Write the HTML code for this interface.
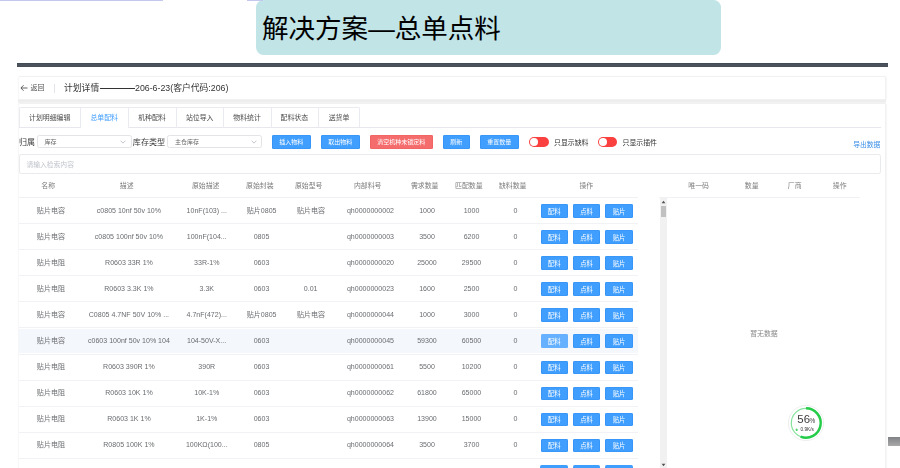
<!DOCTYPE html>
<html lang="zh-CN"><head><meta charset="utf-8"><title>解决方案—总单点料</title>
<style>
html,body{margin:0;padding:0;background:#fff}
body{width:900px;height:468px;position:relative;overflow:hidden;font-family:"Liberation Sans","Noto Sans CJK SC",sans-serif}
#p{position:absolute;left:0;top:0;width:900px;height:468px;overflow:hidden;background:#fff}
.a>div,.a>svg{position:absolute}
#shot{left:0;top:0;width:900px;height:468px;filter:blur(.35px)}
.t{white-space:nowrap}
.t svg{display:block;overflow:visible}
text{font-family:"Liberation Sans","Noto Sans CJK SC",sans-serif}
</style></head><body>
<div id="p" class="a">
<div style="left:0px;top:0px;width:163.3px;height:1.3px;background:#c5c8ee"></div>
<div style="left:255.9px;top:-0.4px;width:464.9px;height:54.9px;background:#c1e4e7;border-radius:7.5px"></div>
<svg style="left:262px;top:14.925px;overflow:visible" width="238.95" height="26.55" viewBox="0 -880 9000 1000"><text x="0" y="0" font-size="1000" fill="#000">解决方案—总单点料</text></svg>
<div style="left:246.7px;top:0px;width:16.5px;height:1.3px;background:#c5c8ee"></div>
<div style="left:17.3px;top:62.6px;width:870.8px;height:4.9px;background:linear-gradient(#3f4751,#4d555f 45%,#464d57)"></div>
<div class="a" id="shot">
<div style="left:17.8px;top:99px;width:868px;height:4.2px;background:linear-gradient(#f5f5f5,#eee 35%,#eee 65%,#f5f5f5)"></div>
<div style="left:17.6px;top:75.8px;width:868.6px;height:24px;background:#fff;border:0.8px solid #f1f1f1;border-left-color:#f7f7f7;border-radius:2px;box-sizing:border-box;box-shadow:0.6px 0 1.2px rgba(0,0,0,.04)"></div>
<div style="left:17.6px;top:102.6px;width:868.6px;height:380px;background:#fff;border:0.8px solid #f1f1f1;border-left-color:#f7f7f7;border-radius:2px;box-sizing:border-box;box-shadow:0.6px 0 1.2px rgba(0,0,0,.04)"></div>
<svg style="left:20px;top:84px" width="8" height="8" viewBox="0 0 8 8"><path d="M7.5 4H1M3.6 1.2L0.9 4l2.7 2.8" fill="none" stroke="#4a4a4a" stroke-width="0.85"/></svg>
<div class="t" style="left:29px;top:82px"><svg width="18" height="13" viewBox="0 0 18 13"><text x="1.5" y="8.37" font-size="7" fill="#555">返回</text></svg></div>
<div style="left:54px;top:84px;width:0.6px;height:8.5px;background:#e2e4ea"></div>
<div class="t" style="left:63px;top:81px"><svg width="39" height="16" viewBox="0 0 39 16"><text x="1" y="10.02" font-size="8.8" fill="#333">计划详情</text></svg></div>
<div style="left:99.5px;top:88.3px;width:35.5px;height:0.9px;background:#333"></div>
<div class="t" style="left:134px;top:81px"><svg width="97" height="16" viewBox="0 0 97 16"><text x="1" y="10.02" font-size="8.8" fill="#333">206-6-23(客户代码:206)</text></svg></div>
<div style="left:19.1px;top:107.4px;width:340.9px;height:20px;border:0.7px solid #e9ebf0;border-bottom:none;border-radius:2px 2px 0 0;box-sizing:border-box"></div>
<div style="left:19.1px;top:127px;width:862px;height:0.7px;background:#e6e8ee"></div>
<div class="t" style="left:28px;top:112px"><svg width="45" height="13" viewBox="0 0 45 13"><text x="1.05" y="8.43" font-size="6.9" fill="#4c4c4c">计划明细编辑</text></svg></div>
<div style="left:80.4px;top:107.5px;width:0.7px;height:20px;background:#e9ebf0"></div>
<div class="t" style="left:89px;top:112px"><svg width="32" height="13" viewBox="0 0 32 13"><text x="1.4" y="8.43" font-size="6.9" fill="#409eff">总单配料</text></svg></div>
<div style="left:128px;top:107.5px;width:0.7px;height:20px;background:#e9ebf0"></div>
<div class="t" style="left:137px;top:112px"><svg width="31" height="13" viewBox="0 0 31 13"><text x="1.2" y="8.43" font-size="6.9" fill="#4c4c4c">机种配料</text></svg></div>
<div style="left:176px;top:107.5px;width:0.7px;height:20px;background:#e9ebf0"></div>
<div class="t" style="left:184px;top:112px"><svg width="32" height="13" viewBox="0 0 32 13"><text x="1.9" y="8.43" font-size="6.9" fill="#4c4c4c">站位导入</text></svg></div>
<div style="left:223.4px;top:107.5px;width:0.7px;height:20px;background:#e9ebf0"></div>
<div class="t" style="left:232px;top:112px"><svg width="31" height="13" viewBox="0 0 31 13"><text x="1.3" y="8.43" font-size="6.9" fill="#4c4c4c">物料统计</text></svg></div>
<div style="left:270.8px;top:107.5px;width:0.7px;height:20px;background:#e9ebf0"></div>
<div class="t" style="left:279px;top:112px"><svg width="32" height="13" viewBox="0 0 32 13"><text x="1.6" y="8.43" font-size="6.9" fill="#4c4c4c">配料状态</text></svg></div>
<div style="left:318px;top:107.5px;width:0.7px;height:20px;background:#e9ebf0"></div>
<div class="t" style="left:327px;top:112px"><svg width="25" height="13" viewBox="0 0 25 13"><text x="1.65" y="8.43" font-size="6.9" fill="#4c4c4c">送货单</text></svg></div>
<div style="left:81.1px;top:126.8px;width:46.9px;height:1.2px;background:#fff"></div>
<div class="t" style="left:18px;top:135px"><svg width="19" height="15" viewBox="0 0 19 15"><text x="1" y="9.63" font-size="8" fill="#3a3a3a">归属</text></svg></div>
<div style="left:36.7px;top:135.2px;width:95.1px;height:13.2px;border:0.7px solid #e3e4e8;border-radius:2.4px;box-sizing:border-box;background:#fff"></div>
<div class="t" style="left:43px;top:136px"><svg width="16" height="12" viewBox="0 0 16 12"><text x="1.5" y="7.81" font-size="6" fill="#666">库存</text></svg></div>
<svg style="left:120px;top:139.5px" width="6" height="4" viewBox="0 0 6 4"><path d="M0.6 0.7L3 3.1L5.4 0.7" fill="none" stroke="#b4b8bf" stroke-width="0.8"/></svg>
<div class="t" style="left:131px;top:135px"><svg width="37" height="15" viewBox="0 0 37 15"><text x="1.8" y="9.57" font-size="8.1" fill="#3a3a3a">库存类型</text></svg></div>
<div style="left:167.2px;top:135.2px;width:94.6px;height:13.2px;border:0.7px solid #e3e4e8;border-radius:2.4px;box-sizing:border-box;background:#fff"></div>
<div class="t" style="left:174px;top:136px"><svg width="27" height="12" viewBox="0 0 27 12"><text x="1" y="7.81" font-size="6" fill="#666">主仓库存</text></svg></div>
<svg style="left:250.5px;top:139.5px" width="6" height="4" viewBox="0 0 6 4"><path d="M0.6 0.7L3 3.1L5.4 0.7" fill="none" stroke="#b4b8bf" stroke-width="0.8"/></svg>
<div style="left:272px;top:135px;width:38.7px;height:13.6px;background:#409eff;border-radius:1.7px;box-shadow:inset 0 0 0 0.6px #318ff3"></div>
<div class="t" style="left:278px;top:136px"><svg width="28" height="12" viewBox="0 0 28 12"><text x="1.35" y="7.91" font-size="6" fill="#fff">插入物料</text></svg></div>
<div style="left:321px;top:135px;width:38.7px;height:13.6px;background:#409eff;border-radius:1.7px;box-shadow:inset 0 0 0 0.6px #318ff3"></div>
<div class="t" style="left:327px;top:136px"><svg width="28" height="12" viewBox="0 0 28 12"><text x="1.35" y="7.91" font-size="6" fill="#fff">取出物料</text></svg></div>
<div style="left:370px;top:135px;width:62.6px;height:13.6px;background:#f56c6c;border-radius:1.7px;box-shadow:inset 0 0 0 0.6px #ee5f5f"></div>
<div class="t" style="left:376px;top:136px"><svg width="52" height="12" viewBox="0 0 52 12"><text x="1.3" y="7.91" font-size="6" fill="#fff">清空机种未锁定料</text></svg></div>
<div style="left:443px;top:135px;width:26.5px;height:13.6px;background:#409eff;border-radius:1.7px;box-shadow:inset 0 0 0 0.6px #318ff3"></div>
<div class="t" style="left:449px;top:136px"><svg width="16" height="12" viewBox="0 0 16 12"><text x="1.25" y="7.91" font-size="6" fill="#fff">刷新</text></svg></div>
<div style="left:480px;top:135px;width:38.7px;height:13.6px;background:#409eff;border-radius:1.7px;box-shadow:inset 0 0 0 0.6px #318ff3"></div>
<div class="t" style="left:486px;top:136px"><svg width="28" height="12" viewBox="0 0 28 12"><text x="1.35" y="7.91" font-size="6" fill="#fff">重置数量</text></svg></div>
<div style="left:529px;top:136.5px;width:19.7px;height:10.4px;background:#fb4040;border-radius:5.2px"></div>
<div style="left:530px;top:137.5px;width:8.4px;height:8.4px;background:#fff;border-radius:50%"></div>
<div class="t" style="left:553px;top:136px"><svg width="38" height="13" viewBox="0 0 38 13"><text x="1" y="8.53" font-size="6.9" fill="#333">只显示缺料</text></svg></div>
<div style="left:597.5px;top:136.5px;width:19.7px;height:10.4px;background:#fb4040;border-radius:5.2px"></div>
<div style="left:598.5px;top:137.5px;width:8.4px;height:8.4px;background:#fff;border-radius:50%"></div>
<div class="t" style="left:621px;top:136px"><svg width="39" height="13" viewBox="0 0 39 13"><text x="1.5" y="8.53" font-size="6.9" fill="#333">只显示插件</text></svg></div>
<div class="t" style="left:852px;top:139px"><svg width="31" height="13" viewBox="0 0 31 13"><text x="1.2" y="8.4" font-size="6.8" fill="#3a8ee6">导出数据</text></svg></div>
<div style="left:19.1px;top:154.2px;width:862px;height:19.6px;border:0.7px solid #e9eaed;border-radius:2.4px;box-sizing:border-box;background:#fff"></div>
<div class="t" style="left:25px;top:159px"><svg width="51" height="13" viewBox="0 0 51 13"><text x="1.4" y="7.9" font-size="6.8" fill="#c0c4cc">请输入检索内容</text></svg></div>
<div class="t" style="left:40px;top:180px"><svg width="18" height="13" viewBox="0 0 18 13"><text x="1.3" y="8.23" font-size="6.9" fill="#7c7c7c">名称</text></svg></div>
<div class="t" style="left:118px;top:180px"><svg width="18" height="13" viewBox="0 0 18 13"><text x="1.8" y="8.23" font-size="6.9" fill="#7c7c7c">描述</text></svg></div>
<div class="t" style="left:190px;top:180px"><svg width="32" height="13" viewBox="0 0 32 13"><text x="1.9" y="8.23" font-size="6.9" fill="#7c7c7c">原始描述</text></svg></div>
<div class="t" style="left:245px;top:180px"><svg width="31" height="13" viewBox="0 0 31 13"><text x="1.1" y="8.23" font-size="6.9" fill="#7c7c7c">原始封装</text></svg></div>
<div class="t" style="left:293px;top:180px"><svg width="32" height="13" viewBox="0 0 32 13"><text x="1.9" y="8.23" font-size="6.9" fill="#7c7c7c">原始型号</text></svg></div>
<div class="t" style="left:352px;top:180px"><svg width="32" height="13" viewBox="0 0 32 13"><text x="1.9" y="8.23" font-size="6.9" fill="#7c7c7c">内部料号</text></svg></div>
<div class="t" style="left:409px;top:180px"><svg width="32" height="13" viewBox="0 0 32 13"><text x="1.9" y="8.23" font-size="6.9" fill="#7c7c7c">需求数量</text></svg></div>
<div class="t" style="left:454px;top:180px"><svg width="31" height="13" viewBox="0 0 31 13"><text x="1" y="8.23" font-size="6.9" fill="#7c7c7c">匹配数量</text></svg></div>
<div class="t" style="left:497px;top:180px"><svg width="32" height="13" viewBox="0 0 32 13"><text x="1.9" y="8.23" font-size="6.9" fill="#7c7c7c">缺料数量</text></svg></div>
<div class="t" style="left:578px;top:180px"><svg width="18" height="13" viewBox="0 0 18 13"><text x="1.4" y="8.23" font-size="6.9" fill="#7c7c7c">操作</text></svg></div>
<div class="t" style="left:687px;top:180px"><svg width="25" height="13" viewBox="0 0 25 13"><text x="1.35" y="8.23" font-size="6.9" fill="#7c7c7c">唯一码</text></svg></div>
<div class="t" style="left:743px;top:180px"><svg width="18" height="13" viewBox="0 0 18 13"><text x="1.8" y="8.23" font-size="6.9" fill="#7c7c7c">数量</text></svg></div>
<div class="t" style="left:786px;top:180px"><svg width="18" height="13" viewBox="0 0 18 13"><text x="1.8" y="8.23" font-size="6.9" fill="#7c7c7c">厂商</text></svg></div>
<div class="t" style="left:831px;top:180px"><svg width="18" height="13" viewBox="0 0 18 13"><text x="1.8" y="8.23" font-size="6.9" fill="#7c7c7c">操作</text></svg></div>
<div style="left:19px;top:197.2px;width:619px;height:0.8px;background:#f0f1f4"></div>
<div style="left:659px;top:197.2px;width:200.5px;height:0.8px;background:#f0f1f4"></div>
<div style="left:19px;top:223.25px;width:619px;height:0.8px;background:#f1f2f5"></div>
<div class="t" style="left:35px;top:204px"><svg width="32" height="13" viewBox="0 0 32 13"><text x="1.83" y="8.84" font-size="7.06" fill="#6a6c70">贴片电容</text></svg></div>
<div class="t" style="left:95px;top:204px"><svg width="69" height="13" viewBox="0 0 69 13"><text x="1.81" y="8.84" font-size="7.06" fill="#6a6c70">c0805 10nf 50v 10%</text></svg></div>
<div class="t" style="left:185px;top:204px"><svg width="45" height="13" viewBox="0 0 45 13"><text x="1.59" y="8.84" font-size="7.06" fill="#6a6c70">10nF(103) ...</text></svg></div>
<div class="t" style="left:245px;top:204px"><svg width="34" height="13" viewBox="0 0 34 13"><text x="1.76" y="8.84" font-size="7.06" fill="#6a6c70">贴片0805</text></svg></div>
<div class="t" style="left:295px;top:204px"><svg width="32" height="13" viewBox="0 0 32 13"><text x="1.93" y="8.84" font-size="7.06" fill="#6a6c70">贴片电容</text></svg></div>
<div class="t" style="left:345px;top:204px"><svg width="52" height="13" viewBox="0 0 52 13"><text x="1.94" y="8.84" font-size="7.06" fill="#6a6c70">qh0000000002</text></svg></div>
<div class="t" style="left:418px;top:204px"><svg width="19" height="13" viewBox="0 0 19 13"><text x="1.15" y="8.84" font-size="7.06" fill="#6a6c70">1000</text></svg></div>
<div class="t" style="left:462px;top:204px"><svg width="20" height="13" viewBox="0 0 20 13"><text x="1.65" y="8.84" font-size="7.06" fill="#6a6c70">1000</text></svg></div>
<div class="t" style="left:512px;top:204px"><svg width="8" height="13" viewBox="0 0 8 13"><text x="1.54" y="8.84" font-size="7.06" fill="#6a6c70">0</text></svg></div>
<div style="left:540.6px;top:204.2px;width:27.1px;height:13.5px;background:#409eff;border-radius:1.7px;box-shadow:inset 0 0 0 0.6px #318ff3"></div>
<div class="t" style="left:546px;top:206px"><svg width="17" height="12" viewBox="0 0 17 12"><text x="1.85" y="7.57" font-size="6.3" fill="#fff">配料</text></svg></div>
<div style="left:572.9px;top:204.2px;width:27.2px;height:13.5px;background:#409eff;border-radius:1.7px;box-shadow:inset 0 0 0 0.6px #318ff3"></div>
<div class="t" style="left:579px;top:206px"><svg width="16" height="12" viewBox="0 0 16 12"><text x="1.2" y="7.57" font-size="6.3" fill="#fff">点料</text></svg></div>
<div style="left:605.3px;top:204.2px;width:27.4px;height:13.5px;background:#409eff;border-radius:1.7px;box-shadow:inset 0 0 0 0.6px #318ff3"></div>
<div class="t" style="left:611px;top:206px"><svg width="17" height="12" viewBox="0 0 17 12"><text x="1.7" y="7.57" font-size="6.3" fill="#fff">贴片</text></svg></div>
<div style="left:19px;top:249.3px;width:619px;height:0.8px;background:#f1f2f5"></div>
<div class="t" style="left:35px;top:230px"><svg width="32" height="13" viewBox="0 0 32 13"><text x="1.83" y="8.88" font-size="7.06" fill="#6a6c70">贴片电容</text></svg></div>
<div class="t" style="left:93px;top:230px"><svg width="73" height="13" viewBox="0 0 73 13"><text x="1.85" y="8.88" font-size="7.06" fill="#6a6c70">c0805 100nf 50v 10%</text></svg></div>
<div class="t" style="left:185px;top:230px"><svg width="44" height="13" viewBox="0 0 44 13"><text x="1.78" y="8.88" font-size="7.06" fill="#6a6c70">100nF(104...</text></svg></div>
<div class="t" style="left:252px;top:230px"><svg width="20" height="13" viewBox="0 0 20 13"><text x="1.65" y="8.88" font-size="7.06" fill="#6a6c70">0805</text></svg></div>
<div class="t" style="left:345px;top:230px"><svg width="52" height="13" viewBox="0 0 52 13"><text x="1.94" y="8.88" font-size="7.06" fill="#6a6c70">qh0000000003</text></svg></div>
<div class="t" style="left:418px;top:230px"><svg width="19" height="13" viewBox="0 0 19 13"><text x="1.15" y="8.88" font-size="7.06" fill="#6a6c70">3500</text></svg></div>
<div class="t" style="left:462px;top:230px"><svg width="20" height="13" viewBox="0 0 20 13"><text x="1.65" y="8.88" font-size="7.06" fill="#6a6c70">6200</text></svg></div>
<div class="t" style="left:512px;top:230px"><svg width="8" height="13" viewBox="0 0 8 13"><text x="1.54" y="8.88" font-size="7.06" fill="#6a6c70">0</text></svg></div>
<div style="left:540.6px;top:230.25px;width:27.1px;height:13.5px;background:#409eff;border-radius:1.7px;box-shadow:inset 0 0 0 0.6px #318ff3"></div>
<div class="t" style="left:546px;top:232px"><svg width="17" height="12" viewBox="0 0 17 12"><text x="1.85" y="7.62" font-size="6.3" fill="#fff">配料</text></svg></div>
<div style="left:572.9px;top:230.25px;width:27.2px;height:13.5px;background:#409eff;border-radius:1.7px;box-shadow:inset 0 0 0 0.6px #318ff3"></div>
<div class="t" style="left:579px;top:232px"><svg width="16" height="12" viewBox="0 0 16 12"><text x="1.2" y="7.62" font-size="6.3" fill="#fff">点料</text></svg></div>
<div style="left:605.3px;top:230.25px;width:27.4px;height:13.5px;background:#409eff;border-radius:1.7px;box-shadow:inset 0 0 0 0.6px #318ff3"></div>
<div class="t" style="left:611px;top:232px"><svg width="17" height="12" viewBox="0 0 17 12"><text x="1.7" y="7.62" font-size="6.3" fill="#fff">贴片</text></svg></div>
<div style="left:19px;top:275.35px;width:619px;height:0.8px;background:#f1f2f5"></div>
<div class="t" style="left:35px;top:256px"><svg width="32" height="13" viewBox="0 0 32 13"><text x="1.83" y="8.92" font-size="7.06" fill="#6a6c70">贴片电阻</text></svg></div>
<div class="t" style="left:104px;top:256px"><svg width="51" height="13" viewBox="0 0 51 13"><text x="1.06" y="8.92" font-size="7.06" fill="#6a6c70">R0603 33R 1%</text></svg></div>
<div class="t" style="left:193px;top:256px"><svg width="29" height="13" viewBox="0 0 29 13"><text x="1.05" y="8.92" font-size="7.06" fill="#6a6c70">33R-1%</text></svg></div>
<div class="t" style="left:252px;top:256px"><svg width="20" height="13" viewBox="0 0 20 13"><text x="1.65" y="8.92" font-size="7.06" fill="#6a6c70">0603</text></svg></div>
<div class="t" style="left:345px;top:256px"><svg width="52" height="13" viewBox="0 0 52 13"><text x="1.94" y="8.92" font-size="7.06" fill="#6a6c70">qh0000000020</text></svg></div>
<div class="t" style="left:416px;top:256px"><svg width="23" height="13" viewBox="0 0 23 13"><text x="1.18" y="8.92" font-size="7.06" fill="#6a6c70">25000</text></svg></div>
<div class="t" style="left:460px;top:256px"><svg width="24" height="13" viewBox="0 0 24 13"><text x="1.68" y="8.92" font-size="7.06" fill="#6a6c70">29500</text></svg></div>
<div class="t" style="left:512px;top:256px"><svg width="8" height="13" viewBox="0 0 8 13"><text x="1.54" y="8.92" font-size="7.06" fill="#6a6c70">0</text></svg></div>
<div style="left:540.6px;top:256.3px;width:27.1px;height:13.5px;background:#409eff;border-radius:1.7px;box-shadow:inset 0 0 0 0.6px #318ff3"></div>
<div class="t" style="left:546px;top:258px"><svg width="17" height="12" viewBox="0 0 17 12"><text x="1.85" y="7.67" font-size="6.3" fill="#fff">配料</text></svg></div>
<div style="left:572.9px;top:256.3px;width:27.2px;height:13.5px;background:#409eff;border-radius:1.7px;box-shadow:inset 0 0 0 0.6px #318ff3"></div>
<div class="t" style="left:579px;top:258px"><svg width="16" height="12" viewBox="0 0 16 12"><text x="1.2" y="7.67" font-size="6.3" fill="#fff">点料</text></svg></div>
<div style="left:605.3px;top:256.3px;width:27.4px;height:13.5px;background:#409eff;border-radius:1.7px;box-shadow:inset 0 0 0 0.6px #318ff3"></div>
<div class="t" style="left:611px;top:258px"><svg width="17" height="12" viewBox="0 0 17 12"><text x="1.7" y="7.67" font-size="6.3" fill="#fff">贴片</text></svg></div>
<div style="left:19px;top:301.4px;width:619px;height:0.8px;background:#f1f2f5"></div>
<div class="t" style="left:35px;top:282px"><svg width="32" height="13" viewBox="0 0 32 13"><text x="1.83" y="8.96" font-size="7.06" fill="#6a6c70">贴片电阻</text></svg></div>
<div class="t" style="left:103px;top:282px"><svg width="53" height="13" viewBox="0 0 53 13"><text x="1.27" y="8.96" font-size="7.06" fill="#6a6c70">R0603 3.3K 1%</text></svg></div>
<div class="t" style="left:198px;top:282px"><svg width="19" height="13" viewBox="0 0 19 13"><text x="1.54" y="8.96" font-size="7.06" fill="#6a6c70">3.3K</text></svg></div>
<div class="t" style="left:252px;top:282px"><svg width="20" height="13" viewBox="0 0 20 13"><text x="1.65" y="8.96" font-size="7.06" fill="#6a6c70">0603</text></svg></div>
<div class="t" style="left:302px;top:282px"><svg width="18" height="13" viewBox="0 0 18 13"><text x="1.83" y="8.96" font-size="7.06" fill="#6a6c70">0.01</text></svg></div>
<div class="t" style="left:345px;top:282px"><svg width="52" height="13" viewBox="0 0 52 13"><text x="1.94" y="8.96" font-size="7.06" fill="#6a6c70">qh0000000023</text></svg></div>
<div class="t" style="left:418px;top:282px"><svg width="19" height="13" viewBox="0 0 19 13"><text x="1.15" y="8.96" font-size="7.06" fill="#6a6c70">1600</text></svg></div>
<div class="t" style="left:462px;top:282px"><svg width="20" height="13" viewBox="0 0 20 13"><text x="1.65" y="8.96" font-size="7.06" fill="#6a6c70">2500</text></svg></div>
<div class="t" style="left:512px;top:282px"><svg width="8" height="13" viewBox="0 0 8 13"><text x="1.54" y="8.96" font-size="7.06" fill="#6a6c70">0</text></svg></div>
<div style="left:540.6px;top:282.35px;width:27.1px;height:13.5px;background:#409eff;border-radius:1.7px;box-shadow:inset 0 0 0 0.6px #318ff3"></div>
<div class="t" style="left:546px;top:284px"><svg width="17" height="12" viewBox="0 0 17 12"><text x="1.85" y="7.72" font-size="6.3" fill="#fff">配料</text></svg></div>
<div style="left:572.9px;top:282.35px;width:27.2px;height:13.5px;background:#409eff;border-radius:1.7px;box-shadow:inset 0 0 0 0.6px #318ff3"></div>
<div class="t" style="left:579px;top:284px"><svg width="16" height="12" viewBox="0 0 16 12"><text x="1.2" y="7.72" font-size="6.3" fill="#fff">点料</text></svg></div>
<div style="left:605.3px;top:282.35px;width:27.4px;height:13.5px;background:#409eff;border-radius:1.7px;box-shadow:inset 0 0 0 0.6px #318ff3"></div>
<div class="t" style="left:611px;top:284px"><svg width="17" height="12" viewBox="0 0 17 12"><text x="1.7" y="7.72" font-size="6.3" fill="#fff">贴片</text></svg></div>
<div style="left:19px;top:327.45px;width:619px;height:0.8px;background:#f1f2f5"></div>
<div class="t" style="left:35px;top:308px"><svg width="32" height="13" viewBox="0 0 32 13"><text x="1.83" y="9" font-size="7.06" fill="#6a6c70">贴片电容</text></svg></div>
<div class="t" style="left:87px;top:308px"><svg width="85" height="13" viewBox="0 0 85 13"><text x="1.77" y="9" font-size="7.06" fill="#6a6c70">C0805 4.7NF 50V 10% ...</text></svg></div>
<div class="t" style="left:185px;top:308px"><svg width="45" height="13" viewBox="0 0 45 13"><text x="1.59" y="9" font-size="7.06" fill="#6a6c70">4.7nF(472)...</text></svg></div>
<div class="t" style="left:245px;top:308px"><svg width="34" height="13" viewBox="0 0 34 13"><text x="1.76" y="9" font-size="7.06" fill="#6a6c70">贴片0805</text></svg></div>
<div class="t" style="left:295px;top:308px"><svg width="32" height="13" viewBox="0 0 32 13"><text x="1.93" y="9" font-size="7.06" fill="#6a6c70">贴片电容</text></svg></div>
<div class="t" style="left:345px;top:308px"><svg width="52" height="13" viewBox="0 0 52 13"><text x="1.94" y="9" font-size="7.06" fill="#6a6c70">qh0000000044</text></svg></div>
<div class="t" style="left:418px;top:308px"><svg width="19" height="13" viewBox="0 0 19 13"><text x="1.15" y="9" font-size="7.06" fill="#6a6c70">1000</text></svg></div>
<div class="t" style="left:462px;top:308px"><svg width="20" height="13" viewBox="0 0 20 13"><text x="1.65" y="9" font-size="7.06" fill="#6a6c70">3000</text></svg></div>
<div class="t" style="left:512px;top:308px"><svg width="8" height="13" viewBox="0 0 8 13"><text x="1.54" y="9" font-size="7.06" fill="#6a6c70">0</text></svg></div>
<div style="left:540.6px;top:308.4px;width:27.1px;height:13.5px;background:#409eff;border-radius:1.7px;box-shadow:inset 0 0 0 0.6px #318ff3"></div>
<div class="t" style="left:546px;top:310px"><svg width="17" height="12" viewBox="0 0 17 12"><text x="1.85" y="7.77" font-size="6.3" fill="#fff">配料</text></svg></div>
<div style="left:572.9px;top:308.4px;width:27.2px;height:13.5px;background:#409eff;border-radius:1.7px;box-shadow:inset 0 0 0 0.6px #318ff3"></div>
<div class="t" style="left:579px;top:310px"><svg width="16" height="12" viewBox="0 0 16 12"><text x="1.2" y="7.77" font-size="6.3" fill="#fff">点料</text></svg></div>
<div style="left:605.3px;top:308.4px;width:27.4px;height:13.5px;background:#409eff;border-radius:1.7px;box-shadow:inset 0 0 0 0.6px #318ff3"></div>
<div class="t" style="left:611px;top:310px"><svg width="17" height="12" viewBox="0 0 17 12"><text x="1.7" y="7.77" font-size="6.3" fill="#fff">贴片</text></svg></div>
<div style="left:19px;top:328.65px;width:619px;height:24.85px;background:#f4f7fb"></div>
<div style="left:19px;top:353.5px;width:619px;height:0.8px;background:#f1f2f5"></div>
<div class="t" style="left:35px;top:334px"><svg width="32" height="13" viewBox="0 0 32 13"><text x="1.83" y="9.04" font-size="7.06" fill="#6a6c70">贴片电容</text></svg></div>
<div class="t" style="left:86px;top:334px"><svg width="87" height="13" viewBox="0 0 87 13"><text x="1.98" y="9.04" font-size="7.06" fill="#6a6c70">c0603 100nf 50v 10% 104</text></svg></div>
<div class="t" style="left:185px;top:334px"><svg width="44" height="13" viewBox="0 0 44 13"><text x="1.98" y="9.04" font-size="7.06" fill="#6a6c70">104-50V-X...</text></svg></div>
<div class="t" style="left:252px;top:334px"><svg width="20" height="13" viewBox="0 0 20 13"><text x="1.65" y="9.04" font-size="7.06" fill="#6a6c70">0603</text></svg></div>
<div class="t" style="left:345px;top:334px"><svg width="52" height="13" viewBox="0 0 52 13"><text x="1.94" y="9.04" font-size="7.06" fill="#6a6c70">qh0000000045</text></svg></div>
<div class="t" style="left:416px;top:334px"><svg width="23" height="13" viewBox="0 0 23 13"><text x="1.18" y="9.04" font-size="7.06" fill="#6a6c70">59300</text></svg></div>
<div class="t" style="left:460px;top:334px"><svg width="24" height="13" viewBox="0 0 24 13"><text x="1.68" y="9.04" font-size="7.06" fill="#6a6c70">60500</text></svg></div>
<div class="t" style="left:512px;top:334px"><svg width="8" height="13" viewBox="0 0 8 13"><text x="1.54" y="9.04" font-size="7.06" fill="#6a6c70">0</text></svg></div>
<div style="left:540.6px;top:334.45px;width:27.1px;height:13.5px;background:#66b1ff;border-radius:1.7px;box-shadow:inset 0 0 0 0.6px #66b1ff"></div>
<div class="t" style="left:546px;top:336px"><svg width="17" height="12" viewBox="0 0 17 12"><text x="1.85" y="7.82" font-size="6.3" fill="#fff">配料</text></svg></div>
<div style="left:572.9px;top:334.45px;width:27.2px;height:13.5px;background:#409eff;border-radius:1.7px;box-shadow:inset 0 0 0 0.6px #318ff3"></div>
<div class="t" style="left:579px;top:336px"><svg width="16" height="12" viewBox="0 0 16 12"><text x="1.2" y="7.82" font-size="6.3" fill="#fff">点料</text></svg></div>
<div style="left:605.3px;top:334.45px;width:27.4px;height:13.5px;background:#409eff;border-radius:1.7px;box-shadow:inset 0 0 0 0.6px #318ff3"></div>
<div class="t" style="left:611px;top:336px"><svg width="17" height="12" viewBox="0 0 17 12"><text x="1.7" y="7.82" font-size="6.3" fill="#fff">贴片</text></svg></div>
<div style="left:19px;top:379.55px;width:619px;height:0.8px;background:#f1f2f5"></div>
<div class="t" style="left:35px;top:361px"><svg width="32" height="13" viewBox="0 0 32 13"><text x="1.83" y="8.08" font-size="7.06" fill="#6a6c70">贴片电阻</text></svg></div>
<div class="t" style="left:102px;top:361px"><svg width="55" height="13" viewBox="0 0 55 13"><text x="1.1" y="8.08" font-size="7.06" fill="#6a6c70">R0603 390R 1%</text></svg></div>
<div class="t" style="left:197px;top:361px"><svg width="21" height="13" viewBox="0 0 21 13"><text x="1.36" y="8.08" font-size="7.06" fill="#6a6c70">390R</text></svg></div>
<div class="t" style="left:252px;top:361px"><svg width="20" height="13" viewBox="0 0 20 13"><text x="1.65" y="8.08" font-size="7.06" fill="#6a6c70">0603</text></svg></div>
<div class="t" style="left:345px;top:361px"><svg width="52" height="13" viewBox="0 0 52 13"><text x="1.94" y="8.08" font-size="7.06" fill="#6a6c70">qh0000000061</text></svg></div>
<div class="t" style="left:418px;top:361px"><svg width="19" height="13" viewBox="0 0 19 13"><text x="1.15" y="8.08" font-size="7.06" fill="#6a6c70">5500</text></svg></div>
<div class="t" style="left:460px;top:361px"><svg width="24" height="13" viewBox="0 0 24 13"><text x="1.68" y="8.08" font-size="7.06" fill="#6a6c70">10200</text></svg></div>
<div class="t" style="left:512px;top:361px"><svg width="8" height="13" viewBox="0 0 8 13"><text x="1.54" y="8.08" font-size="7.06" fill="#6a6c70">0</text></svg></div>
<div style="left:540.6px;top:360.5px;width:27.1px;height:13.5px;background:#409eff;border-radius:1.7px;box-shadow:inset 0 0 0 0.6px #318ff3"></div>
<div class="t" style="left:546px;top:362px"><svg width="17" height="12" viewBox="0 0 17 12"><text x="1.85" y="7.87" font-size="6.3" fill="#fff">配料</text></svg></div>
<div style="left:572.9px;top:360.5px;width:27.2px;height:13.5px;background:#409eff;border-radius:1.7px;box-shadow:inset 0 0 0 0.6px #318ff3"></div>
<div class="t" style="left:579px;top:362px"><svg width="16" height="12" viewBox="0 0 16 12"><text x="1.2" y="7.87" font-size="6.3" fill="#fff">点料</text></svg></div>
<div style="left:605.3px;top:360.5px;width:27.4px;height:13.5px;background:#409eff;border-radius:1.7px;box-shadow:inset 0 0 0 0.6px #318ff3"></div>
<div class="t" style="left:611px;top:362px"><svg width="17" height="12" viewBox="0 0 17 12"><text x="1.7" y="7.87" font-size="6.3" fill="#fff">贴片</text></svg></div>
<div style="left:19px;top:405.6px;width:619px;height:0.8px;background:#f1f2f5"></div>
<div class="t" style="left:35px;top:387px"><svg width="32" height="13" viewBox="0 0 32 13"><text x="1.83" y="8.12" font-size="7.06" fill="#6a6c70">贴片电阻</text></svg></div>
<div class="t" style="left:104px;top:387px"><svg width="51" height="13" viewBox="0 0 51 13"><text x="1.25" y="8.12" font-size="7.06" fill="#6a6c70">R0603 10K 1%</text></svg></div>
<div class="t" style="left:193px;top:387px"><svg width="29" height="13" viewBox="0 0 29 13"><text x="1.24" y="8.12" font-size="7.06" fill="#6a6c70">10K-1%</text></svg></div>
<div class="t" style="left:252px;top:387px"><svg width="20" height="13" viewBox="0 0 20 13"><text x="1.65" y="8.12" font-size="7.06" fill="#6a6c70">0603</text></svg></div>
<div class="t" style="left:345px;top:387px"><svg width="52" height="13" viewBox="0 0 52 13"><text x="1.94" y="8.12" font-size="7.06" fill="#6a6c70">qh0000000062</text></svg></div>
<div class="t" style="left:416px;top:387px"><svg width="23" height="13" viewBox="0 0 23 13"><text x="1.18" y="8.12" font-size="7.06" fill="#6a6c70">61800</text></svg></div>
<div class="t" style="left:460px;top:387px"><svg width="24" height="13" viewBox="0 0 24 13"><text x="1.68" y="8.12" font-size="7.06" fill="#6a6c70">65000</text></svg></div>
<div class="t" style="left:512px;top:387px"><svg width="8" height="13" viewBox="0 0 8 13"><text x="1.54" y="8.12" font-size="7.06" fill="#6a6c70">0</text></svg></div>
<div style="left:540.6px;top:386.55px;width:27.1px;height:13.5px;background:#409eff;border-radius:1.7px;box-shadow:inset 0 0 0 0.6px #318ff3"></div>
<div class="t" style="left:546px;top:388px"><svg width="17" height="12" viewBox="0 0 17 12"><text x="1.85" y="7.92" font-size="6.3" fill="#fff">配料</text></svg></div>
<div style="left:572.9px;top:386.55px;width:27.2px;height:13.5px;background:#409eff;border-radius:1.7px;box-shadow:inset 0 0 0 0.6px #318ff3"></div>
<div class="t" style="left:579px;top:388px"><svg width="16" height="12" viewBox="0 0 16 12"><text x="1.2" y="7.92" font-size="6.3" fill="#fff">点料</text></svg></div>
<div style="left:605.3px;top:386.55px;width:27.4px;height:13.5px;background:#409eff;border-radius:1.7px;box-shadow:inset 0 0 0 0.6px #318ff3"></div>
<div class="t" style="left:611px;top:388px"><svg width="17" height="12" viewBox="0 0 17 12"><text x="1.7" y="7.92" font-size="6.3" fill="#fff">贴片</text></svg></div>
<div style="left:19px;top:431.65px;width:619px;height:0.8px;background:#f1f2f5"></div>
<div class="t" style="left:35px;top:413px"><svg width="32" height="13" viewBox="0 0 32 13"><text x="1.83" y="8.16" font-size="7.06" fill="#6a6c70">贴片电阻</text></svg></div>
<div class="t" style="left:106px;top:413px"><svg width="47" height="13" viewBox="0 0 47 13"><text x="1.22" y="8.16" font-size="7.06" fill="#6a6c70">R0603 1K 1%</text></svg></div>
<div class="t" style="left:195px;top:413px"><svg width="25" height="13" viewBox="0 0 25 13"><text x="1.2" y="8.16" font-size="7.06" fill="#6a6c70">1K-1%</text></svg></div>
<div class="t" style="left:252px;top:413px"><svg width="20" height="13" viewBox="0 0 20 13"><text x="1.65" y="8.16" font-size="7.06" fill="#6a6c70">0603</text></svg></div>
<div class="t" style="left:345px;top:413px"><svg width="52" height="13" viewBox="0 0 52 13"><text x="1.94" y="8.16" font-size="7.06" fill="#6a6c70">qh0000000063</text></svg></div>
<div class="t" style="left:416px;top:413px"><svg width="23" height="13" viewBox="0 0 23 13"><text x="1.18" y="8.16" font-size="7.06" fill="#6a6c70">13900</text></svg></div>
<div class="t" style="left:460px;top:413px"><svg width="24" height="13" viewBox="0 0 24 13"><text x="1.68" y="8.16" font-size="7.06" fill="#6a6c70">15000</text></svg></div>
<div class="t" style="left:512px;top:413px"><svg width="8" height="13" viewBox="0 0 8 13"><text x="1.54" y="8.16" font-size="7.06" fill="#6a6c70">0</text></svg></div>
<div style="left:540.6px;top:412.6px;width:27.1px;height:13.5px;background:#409eff;border-radius:1.7px;box-shadow:inset 0 0 0 0.6px #318ff3"></div>
<div class="t" style="left:546px;top:414px"><svg width="17" height="12" viewBox="0 0 17 12"><text x="1.85" y="7.97" font-size="6.3" fill="#fff">配料</text></svg></div>
<div style="left:572.9px;top:412.6px;width:27.2px;height:13.5px;background:#409eff;border-radius:1.7px;box-shadow:inset 0 0 0 0.6px #318ff3"></div>
<div class="t" style="left:579px;top:414px"><svg width="16" height="12" viewBox="0 0 16 12"><text x="1.2" y="7.97" font-size="6.3" fill="#fff">点料</text></svg></div>
<div style="left:605.3px;top:412.6px;width:27.4px;height:13.5px;background:#409eff;border-radius:1.7px;box-shadow:inset 0 0 0 0.6px #318ff3"></div>
<div class="t" style="left:611px;top:414px"><svg width="17" height="12" viewBox="0 0 17 12"><text x="1.7" y="7.97" font-size="6.3" fill="#fff">贴片</text></svg></div>
<div style="left:19px;top:457.7px;width:619px;height:0.8px;background:#f1f2f5"></div>
<div class="t" style="left:35px;top:439px"><svg width="32" height="13" viewBox="0 0 32 13"><text x="1.83" y="8.2" font-size="7.06" fill="#6a6c70">贴片电阻</text></svg></div>
<div class="t" style="left:102px;top:439px"><svg width="55" height="13" viewBox="0 0 55 13"><text x="1.29" y="8.2" font-size="7.06" fill="#6a6c70">R0805 100K 1%</text></svg></div>
<div class="t" style="left:184px;top:439px"><svg width="46" height="13" viewBox="0 0 46 13"><text x="1.91" y="8.2" font-size="7.06" fill="#6a6c70">100KΩ(100...</text></svg></div>
<div class="t" style="left:252px;top:439px"><svg width="20" height="13" viewBox="0 0 20 13"><text x="1.65" y="8.2" font-size="7.06" fill="#6a6c70">0805</text></svg></div>
<div class="t" style="left:345px;top:439px"><svg width="52" height="13" viewBox="0 0 52 13"><text x="1.94" y="8.2" font-size="7.06" fill="#6a6c70">qh0000000064</text></svg></div>
<div class="t" style="left:418px;top:439px"><svg width="19" height="13" viewBox="0 0 19 13"><text x="1.15" y="8.2" font-size="7.06" fill="#6a6c70">3500</text></svg></div>
<div class="t" style="left:462px;top:439px"><svg width="20" height="13" viewBox="0 0 20 13"><text x="1.65" y="8.2" font-size="7.06" fill="#6a6c70">3700</text></svg></div>
<div class="t" style="left:512px;top:439px"><svg width="8" height="13" viewBox="0 0 8 13"><text x="1.54" y="8.2" font-size="7.06" fill="#6a6c70">0</text></svg></div>
<div style="left:540.6px;top:438.65px;width:27.1px;height:13.5px;background:#409eff;border-radius:1.7px;box-shadow:inset 0 0 0 0.6px #318ff3"></div>
<div class="t" style="left:546px;top:440px"><svg width="17" height="12" viewBox="0 0 17 12"><text x="1.85" y="8.02" font-size="6.3" fill="#fff">配料</text></svg></div>
<div style="left:572.9px;top:438.65px;width:27.2px;height:13.5px;background:#409eff;border-radius:1.7px;box-shadow:inset 0 0 0 0.6px #318ff3"></div>
<div class="t" style="left:579px;top:440px"><svg width="16" height="12" viewBox="0 0 16 12"><text x="1.2" y="8.02" font-size="6.3" fill="#fff">点料</text></svg></div>
<div style="left:605.3px;top:438.65px;width:27.4px;height:13.5px;background:#409eff;border-radius:1.7px;box-shadow:inset 0 0 0 0.6px #318ff3"></div>
<div class="t" style="left:611px;top:440px"><svg width="17" height="12" viewBox="0 0 17 12"><text x="1.7" y="8.02" font-size="6.3" fill="#fff">贴片</text></svg></div>
<div style="left:540.4px;top:464.7px;width:27.3px;height:13.3px;background:#409eff;border-radius:1.7px"></div>
<div style="left:572.9px;top:464.7px;width:27.3px;height:13.3px;background:#409eff;border-radius:1.7px"></div>
<div style="left:605.4px;top:464.7px;width:27.3px;height:13.3px;background:#409eff;border-radius:1.7px"></div>
<div style="left:659.7px;top:197.5px;width:7.7px;height:271px;background:#f1f1f1"></div>
<div style="left:660.9px;top:206px;width:5.5px;height:10.8px;background:#c1c1c1"></div>
<svg style="left:661.1px;top:200.3px" width="5" height="4" viewBox="0 0 5 4"><path d="M0.6 3.2L2.5 0.8L4.4 3.2z" fill="#505050"/></svg>
<svg style="left:661px;top:462.8px" width="5" height="4" viewBox="0 0 5 4"><path d="M0.6 0.8L2.5 3.2L4.4 0.8z" fill="#505050"/></svg>
<div class="t" style="left:749px;top:328px"><svg width="31" height="13" viewBox="0 0 31 13"><text x="1.2" y="8.33" font-size="6.9" fill="#888">暂无数据</text></svg></div>
<svg style="left:786.4px;top:403.4px" width="40" height="40" viewBox="0 0 40 40">
<circle cx="20" cy="20" r="17.6" fill="#fff" stroke="#ececec" stroke-width="0.9"/>
<circle cx="20" cy="20" r="14.7" fill="none" stroke="#86e29c" stroke-width="1.2"/>
<path d="M20 5.30A14.7 14.7 0 1 1 14.59 33.67" fill="none" stroke="#25cc4a" stroke-width="2.5"/>
<path d="M10.7 25.4v1.6M9.8 26.7l0.9 1.3l0.9-1.3z" fill="#2fcc55" stroke="#2fcc55" stroke-width="0.6"/>
</svg>
<div class="t" style="left:796px;top:410px"><svg width="16" height="19" viewBox="0 0 16 19"><text x="1.3" y="12.95" font-size="11.4" fill="#3c3c3c">56</text></svg></div>
<div class="t" style="left:808px;top:415px"><svg width="10" height="12" viewBox="0 0 10 12"><text x="1.6" y="8.15" font-size="6.4" fill="#3c3c3c">%</text></svg></div>
<div class="t" style="left:799px;top:425px"><svg width="17" height="10" viewBox="0 0 17 10"><text x="1.6" y="5.84" font-size="4.7" fill="#333">0.9K/s</text></svg></div>
</div>
<div style="left:888.2px;top:437.4px;width:12px;height:8.6px;background:linear-gradient(#808286,#a9a9a9)"></div>
</div>
</body></html>
